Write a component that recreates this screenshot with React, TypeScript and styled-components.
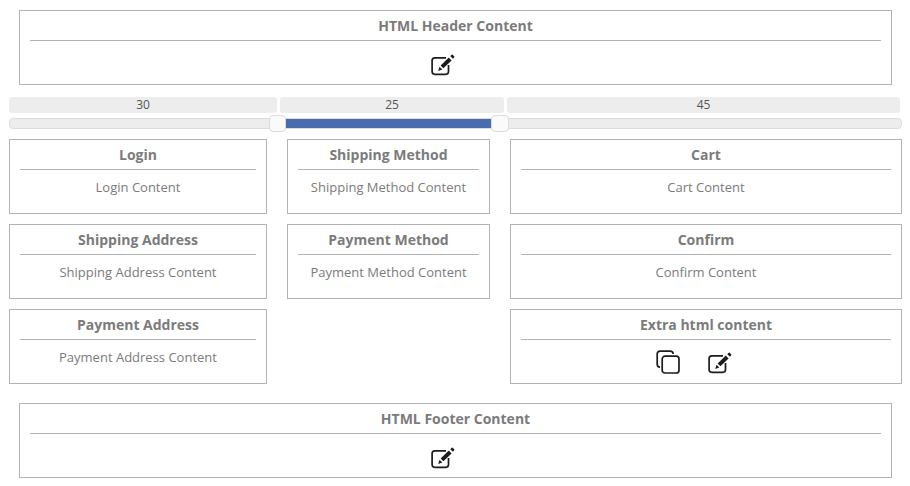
import React from 'react';
import styled, { createGlobalStyle } from 'styled-components';

const GlobalStyle = createGlobalStyle`
  * { box-sizing: border-box; }
  body {
    margin: 0;
    background: #fff;
    color: #7b7b7b;
    font-family: 'Open Sans', sans-serif;
    font-size: 13px;
  }
`;

const Page = styled.main`
  width: 910px;
  height: 486px;
  padding: 10px 8px 0 9px;
  overflow: hidden;
`;

const Panel = styled.section<{ $inset?: boolean }>`
  height: 75px;
  margin: ${(p) => (p.$inset ? '0 10px' : '0')};
  padding: 0 10px;
  border: 1px solid #b3b3b3;
  text-align: center;
`;

const PanelTitle = styled.h2`
  margin: 0;
  height: 30px;
  border-bottom: 1px solid #b3b3b3;
  font-size: 14px;
  font-weight: 700;
  line-height: 29px;
`;

const PanelText = styled.p`
  margin: 0;
  line-height: 35px;
`;

const Actions = styled.div<{ $pair?: boolean }>`
  display: flex;
  justify-content: center;
  align-items: flex-end;
  gap: 28px;
  height: ${(p) => (p.$pair ? 34 : 35)}px;
  margin-left: -24px;
  padding-right: ${(p) => (p.$pair ? 0 : 1)}px;
  svg { display: block; flex: none; }
`;

const Labels = styled.div`
  display: grid;
  grid-template-columns: 268px 224px 393px;
  column-gap: 3px;
  margin-top: 12px;
`;

const Label = styled.div`
  height: 16px;
  border-radius: 3px;
  background: #ededed;
  color: #555;
  font-size: 12px;
  line-height: 15px;
  text-align: center;
`;

const Track = styled.div`
  position: relative;
  height: 11px;
  margin-top: 5px;
  border: 1px solid #dcdcdc;
  border-radius: 4px;
  background: #ededed;
`;

const Range = styled.div`
  height: 9px;
  margin-left: 268px;
  width: 223px;
  background: #486cae;
`;

const Thumb = styled.span<{ $x: number; $w: number }>`
  position: absolute;
  top: -4px;
  left: ${(p) => p.$x}px;
  width: ${(p) => p.$w}px;
  height: 17px;
  border: 1px solid #dcdcdc;
  border-radius: 4px;
  background: #fafafa;
`;

const Columns = styled.div`
  display: grid;
  grid-template-columns: 258px 203px 392px;
  column-gap: 20px;
  margin: 10px 0 19px;
`;

const Column = styled.div`
  display: flex;
  flex-direction: column;
  gap: 10px;
`;

const EditIcon = () => (
  <svg width="24" height="22" viewBox="0 0 24 22" fill="none">
    <path d="M15 3.9H3.8Q1.1 3.9 1.1 6.6v11Q1.1 20.3 3.8 20.3h11Q17.5 20.3 17.5 17.6V11" stroke="#1c1c1c" strokeWidth="1.7" />
    <path d="M7.2 17l1.3-4.2 2.8 2.7z" fill="#1c1c1c" />
    <path d="M9.6 11.5L17.8 3.6l2.8 2.9-8.2 7.8z" fill="#1c1c1c" />
    <path d="M19.3 2.2L20.7.8q.5-.5 1 0l1.5 1.5q.5.5 0 1L22 4.7z" fill="#1c1c1c" />
  </svg>
);

const CopyIcon = () => (
  <svg width="24" height="24" viewBox="0 0 24 24" fill="none" stroke="#1c1c1c" strokeWidth="1.7">
    <path d="M4 17.2Q1.2 17 1.2 14.2V4.1Q1.2 1.2 4.1 1.2h10Q17 1.2 17.2 4" />
    <rect x="6.2" y="6.2" width="16.8" height="16.8" rx="2.8" />
  </svg>
);

const EditPanel = ({ title }: { title: string }) => (
  <Panel $inset>
    <PanelTitle>{title}</PanelTitle>
    <Actions><EditIcon /></Actions>
  </Panel>
);

const Block = ({ title }: { title: string }) => (
  <Panel>
    <PanelTitle>{title}</PanelTitle>
    <PanelText>{title} Content</PanelText>
  </Panel>
);

export default function App() {
  return (
    <>
      <GlobalStyle />
      <Page>
        <EditPanel title="HTML Header Content" />
        <Labels>
          <Label>30</Label>
          <Label>25</Label>
          <Label>45</Label>
        </Labels>
        <Track>
          <Range />
          <Thumb $x={259} $w={17} />
          <Thumb $x={481} $w={18} />
        </Track>
        <Columns>
          <Column>
            <Block title="Login" />
            <Block title="Shipping Address" />
            <Block title="Payment Address" />
          </Column>
          <Column>
            <Block title="Shipping Method" />
            <Block title="Payment Method" />
          </Column>
          <Column>
            <Block title="Cart" />
            <Block title="Confirm" />
            <Panel>
              <PanelTitle>Extra html content</PanelTitle>
              <Actions $pair>
                <CopyIcon />
                <EditIcon />
              </Actions>
            </Panel>
          </Column>
        </Columns>
        <EditPanel title="HTML Footer Content" />
      </Page>
    </>
  );
}
